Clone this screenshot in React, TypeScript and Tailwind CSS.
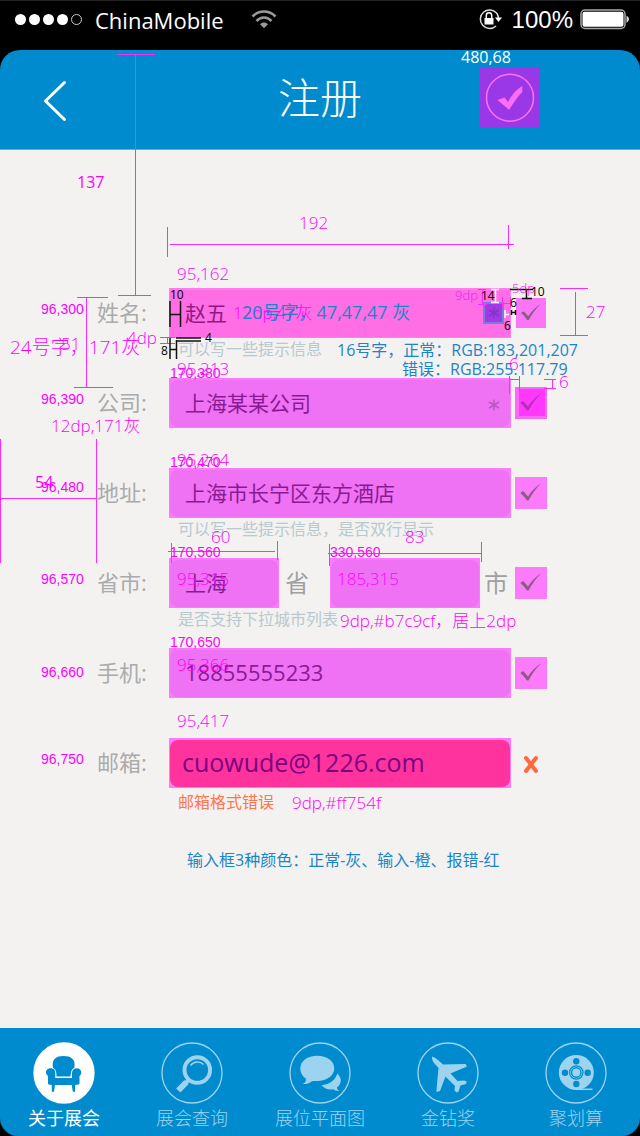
import type { ReactNode } from "react";

function StatusBar() {
  return (
    <div className="flex h-[50px] items-start border-t border-[#222] pl-[15px] pr-[10px] text-white">
      <svg className="mt-[12px] h-[14px] w-[70px]" viewBox="0 0 70 14" aria-hidden="true">
        {[5.5, 19.5, 33.5, 47.5].map((x) => (
          <circle key={x} cx={x} cy="6.5" r="5.5" fill="#fff" />
        ))}
        <circle cx="61.5" cy="6.5" r="5" fill="none" stroke="#ccc" />
      </svg>
      <span className="ml-[10px] mt-[3px] text-[22px] leading-8">ChinaMobile</span>
      <svg className="ml-[27px] mt-[9px] h-[19px] w-[26px]" viewBox="0 0 26 19" fill="none" stroke="#999" aria-hidden="true">
        <path d="M1.500 6.500C8-.2 18-.2 24.500 6.500" strokeWidth="2.600" />
        <path d="M5.500 11C10 6.300 16 6.300 20.500 11" strokeWidth="2.600" />
        <path d="M9 14.200C11.300 12 14.700 12 17 14.200L13 18.200Z" fill="#999" stroke="none" />
      </svg>
      <svg className="ml-auto mt-[7px] h-[22px] w-[24px]" viewBox="0 0 24 22" aria-hidden="true">
        <path d="M19 5.500A9.300 9.300 0 1 0 18 18M19 5.500Q20.500 8 20.500 11" fill="none" stroke="#ddd" strokeWidth="1.500" />
        <path d="M17 9.500H24L20.500 14Z" fill="#fff" />
        <rect x="6.500" y="10" width="9" height="6.500" fill="#fff" />
        <path d="M8.300 10V7.500a2.700 2.700 0 0 1 5.400 0V10" fill="none" stroke="#fff" strokeWidth="1.500" />
      </svg>
      <span className="ml-[10px] mt-[3px] font-['Liberation_Sans',sans-serif] text-[24px] leading-8">100%</span>
      <svg className="ml-[7px] mt-[8px] h-[21px] w-[50px]" viewBox="0 0 50 21" aria-hidden="true">
        <rect x="1" y="1" width="44" height="18.500" rx="4" fill="none" stroke="#aaa" strokeWidth="1.500" />
        <rect x="2.500" y="2.700" width="41" height="15" rx="2" fill="#fff" />
        <path d="M46.500 6.500Q49 8 49 10.200T46.500 14Z" fill="#ddd" />
      </svg>
    </div>
  );
}

function Header() {
  return (
    <header className="grid h-[100px] grid-cols-[1fr_auto_1fr] items-center rounded-t-[20px] border-b border-[#58b4dd] bg-[#008bce] pb-[3px]">
      <button type="button" aria-label="返回" className="ml-[36px] flex h-[60px] w-[40px] items-center justify-center">
        <svg className="mt-[6px] h-[44px] w-[26px]" viewBox="0 0 26 44" fill="none" stroke="#fff" strokeWidth="3" strokeLinecap="round" strokeLinejoin="round" aria-hidden="true">
          <path d="M21.500 3.500L2.500 22L21.500 40.500" />
        </svg>
      </button>
      <h1 className="text-[42px] font-light leading-[60px] text-white">注册</h1>
      <button type="button" aria-label="提交" className="mr-[100px] h-[60px] w-[60px] justify-self-end bg-[#9a38e8]">
        <svg className="h-full w-full" viewBox="0 0 60 60" aria-hidden="true">
          <circle cx="30" cy="29.700" r="23.500" fill="none" stroke="#ff70f8" strokeWidth="1.500" />
          <path d="M17.500 32L24.500 29.500L28 34C31 28 36 21.500 42.300 18V24C37 29 33 36 29 42C26 39 21 35 17.500 32Z" fill="#ff6cf8" />
        </svg>
      </button>
    </header>
  );
}

type TickTone = "small" | "bright" | "plain";

function Tick({ tone = "plain" }: { tone?: TickTone }) {
  const box =
    tone === "small"
      ? "mx-px h-[30px] w-[30px] bg-[#fb76f6]"
      : tone === "bright"
        ? "h-[32px] w-[32px] bg-[#fa68f6]"
        : "h-[32px] w-[32px] bg-[#fc7bfa]";
  return (
    <span className={`block shrink-0 ${box}`}>
      <svg className="h-full w-full" viewBox="0 0 32 32" aria-hidden="true">
        {tone === "bright" && <rect x="4" y="2" width="26" height="27" fill="#ff38fc" />}
        <path d="M5.500 16Q8 13 9.500 15.500L13 19.500Q18 11.500 26.500 6Q19 13 13.500 23.500H12Q9 19 5.500 16Z" fill={tone === "bright" ? "#b42fbc" : "#8b5c84"} />
      </svg>
    </span>
  );
}

function Row({ id, label, hint, error, mark, children }: { id: string; label: string; hint?: string; error?: boolean; mark: ReactNode; children: ReactNode }) {
  return (
    <div className="h-[90px]">
      <div className="flex h-[50px] items-center">
        <label htmlFor={id} className="w-[72px] shrink-0 pb-[2px] text-[22px] leading-8 text-[#ababab]">
          {label}
        </label>
        <div className="flex min-w-0 flex-1 items-center">{children}</div>
        <div className="ml-1 flex w-8 shrink-0 justify-center">{mark}</div>
      </div>
      {hint && (
        <p className={error ? "pl-[81px] pt-1 text-[16px] leading-5 text-[#ff754f]" : "pl-[81px] pt-px text-[16px] leading-5 text-[#b7c9cf]"}>{hint}</p>
      )}
    </div>
  );
}

function Field({ id, value, label, className = "flex-1", tone = "bg-[#ee72f3] rounded-[8px] text-[#8a1a93]", frame = "bg-[#fc7bfa]", text = "text-[21px] pl-[15px]", star }: { id: string; value: string; label?: string; className?: string; tone?: string; frame?: string; text?: string; star?: ReactNode }) {
  return (
    <div className={`relative h-[50px] min-w-0 px-px pb-px pt-[2px] ${frame} ${className}`}>
      <input id={id} aria-label={label} defaultValue={value} className={`block h-full w-full pb-1 outline-none ${tone} ${text}`} />
      {star}
    </div>
  );
}

function Star({ color }: { color: string }) {
  return (
    <svg className="h-[14px] w-[14px]" viewBox="0 0 14 14" fill="none" stroke={color} strokeWidth="1.500" aria-hidden="true">
      <path d="M7 1.500V12.500M2 4L12 10M12 4L2 10" />
    </svg>
  );
}

function Form() {
  return (
    <form className="pl-[97px] pr-[93px] pt-[138px]">
      <Row id="name" label="姓名:" hint="可以写一些提示信息" mark={<Tick tone="small" />}>
        <Field
          id="name"
          value="赵五"
          frame="bg-[#ff7cec]"
          tone="bg-[#ff6ee4] text-[#8d1a83]"
          star={
            <span className="absolute right-[7px] top-[14px] flex h-[22px] w-[21px] items-center justify-center border-2 border-[#7481dc] bg-[#a238e8]">
              <Star color="#8434c8" />
            </span>
          }
        />
      </Row>
      <Row id="company" label="公司:" mark={<Tick tone="bright" />}>
        <Field
          id="company"
          value="上海某某公司"
          star={
            <span className="absolute right-[10px] top-[20px]">
              <Star color="#b858c0" />
            </span>
          }
        />
      </Row>
      <Row id="address" label="地址:" hint="可以写一些提示信息，是否双行显示" mark={<Tick />}>
        <Field id="address" value="上海市长宁区东方酒店" />
      </Row>
      <Row id="province" label="省市:" hint="是否支持下拉城市列表" mark={<Tick />}>
        <Field id="province" value="上海" className="w-[110px] shrink-0" />
        <span className="w-[51px] shrink-0 pl-[6px] text-[24px] leading-8 text-[#a0a0a0]">省</span>
        <Field id="city" label="市" value="" className="flex-1" />
        <span className="w-[31px] shrink-0 pl-[4px] text-[24px] leading-8 text-[#a0a0a0]">市</span>
      </Row>
      <Row id="phone" label="手机:" mark={<Tick />}>
        <Field id="phone" value="18855555233" text="text-[22px] pl-[15px]" />
      </Row>
      <Row
        id="email"
        label="邮箱:"
        hint="邮箱格式错误"
        error
        mark={
          <svg className="h-[20px] w-[16px]" viewBox="0 0 16 20" fill="none" stroke="#ff6a3c" strokeWidth="4" strokeLinecap="round" aria-hidden="true">
            <path d="M3 5L13 18M13 5L3 18" />
          </svg>
        }
      >
        <Field id="email" value="cuowude@1226.com" tone="bg-[#ff339d] rounded-[8px] text-[#7b0080]" text="text-[25px] pl-[12px]" />
      </Row>
      <p className="pl-[90px] pt-[22px] text-[16px] leading-5 text-[#1c85c7]">输入框3种颜色：正常-灰、输入-橙、报错-红</p>
    </form>
  );
}

const light = "#9dd3ee";

const tabs: { name: string; active?: boolean; icon: ReactNode }[] = [
  {
    name: "关于展会",
    active: true,
    icon: (
      <g fill="#008bce">
        <path d="M20 26C18.500 17 23 14 30.500 14S43 17 41.300 26C38 27.500 38 30 37.500 34.500H23.500C23.500 30 23 27.500 20 26Z" />
        <path d="M13 30.500C13 27.500 15.500 26.300 17.700 26.300C21 26.300 22.300 28.500 22.300 31V36H39V31C39 28.500 40.500 26.300 43.500 26.300C46 26.300 48.300 27.800 48.300 30.500C48.300 32.500 46.500 34 46.500 34V41C46.500 42 45.500 42.500 45 42.500L42 43V49.700H39.800L38.800 43H22L21 49.700H18.800V43L16 42.500C15.500 42.500 15 42 15 41V34S13 32.500 13 30.500Z" />
      </g>
    ),
  },
  {
    name: "展会查询",
    icon: (
      <g fill="none" stroke={light}>
        <circle cx="36.300" cy="28" r="12.800" strokeWidth="4" />
        <path d="M29.500 23.500A8.500 8.500 0 0 1 42.500 22.500" strokeWidth="1.500" />
        <path d="M27.500 38L24 42" strokeWidth="4" />
        <path d="M25.500 40L17.300 48.500" strokeWidth="6" />
      </g>
    ),
  },
  {
    name: "展位平面图",
    icon: (
      <g fill={light}>
        <path d="M28.300 13.700C38 13.700 45.300 19 45.300 26.300S38 39 28.300 39C25.500 39 23 38.600 21 40.500Q18 42.500 13.800 42C16.500 40.500 17.300 39 16.800 36.500C13 34 11.300 30.500 11.300 26.300C11.300 19 18.500 13.700 28.300 13.700Z" />
        <path d="M48.300 31.500C53 36 53 41.500 48 45.500Q47.800 47.500 50.500 49Q46 49.200 44.300 47.300C39.500 48 35.500 46.800 32.500 43.300C40.500 42.500 46.500 38 48.300 31.500Z" />
      </g>
    ),
  },
  {
    name: "金钻奖",
    icon: <path fill={light} d="M15 14.500Q18 15 21 18L26 22.500L48.500 22L50 24.500L33.500 31.500L40.500 39L47 38.500L49.700 39.500L49 42L43.500 43.500L41.500 49.500L39.500 50.500L37.500 48.500L38 44L28.500 34.500L23 49L19.500 50V48L21.500 26L17 21Q14.500 17.500 15 14.500Z" />,
  },
  {
    name: "聚划算",
    icon: (
      <g>
        <circle cx="31.300" cy="30.500" r="17.500" fill={light} />
        <path d="M31 47.300H47.500" stroke={light} strokeWidth="1.500" />
        <g fill="#008bce">
          <circle cx="31.300" cy="19.300" r="3.200" />
          <circle cx="31.300" cy="42" r="3.200" />
          <circle cx="20" cy="30.700" r="3.200" />
          <circle cx="42.700" cy="30.700" r="3.200" />
        </g>
        <circle cx="31.300" cy="30.500" r="6.700" fill="none" stroke="#008bce" strokeWidth="1.200" />
        <circle cx="31.300" cy="30.500" r="4.700" fill={light} stroke="#008bce" strokeWidth="1.400" />
      </g>
    ),
  },
];

function TabBar() {
  return (
    <nav className="grid h-[108px] grid-cols-5 rounded-b-[18px] bg-[#008bce] pt-[14px]">
      {tabs.map((tab) => (
        <a key={tab.name} href="#" className={`flex flex-col items-center text-[18px] leading-7 ${tab.active ? "text-white" : "font-light text-[#9dd3ee]"}`}>
          <svg className="h-[62px] w-[62px]" viewBox="0 0 62 62" aria-hidden="true">
            <circle cx="31" cy="31" r="30" fill={tab.active ? "#fff" : "none"} stroke={tab.active ? "#fff" : light} strokeWidth="1.300" />
            {tab.icon}
          </svg>
          <span>{tab.name}</span>
        </a>
      ))}
    </nav>
  );
}

const big = "text-[17px] font-light text-[#ff00ff]";
const coord = "font-['Liberation_Sans',sans-serif] text-[14px] text-[#ff00ff]";
const tiny = "text-[12px] text-black";
const blue = "text-[#1c85c7]";

const notes: [string, string][] = [
  ["480,68", "left-[461px] top-[47px] text-[16px] text-white"],
  ["137", "left-[77px] top-[172px] text-[16px] font-medium text-[#ff00ff]"],
  ["192", `left-[299px] top-[213px] ${big}`],
  ["95,162", `left-[177px] top-[264px] ${big}`],
  ["96,300", `left-[41px] top-[299px] ${coord}`],
  ["51", `left-[61px] top-[334px] ${big}`],
  ["24号字，171灰", "left-[10px] top-[337px] text-[19px] font-light text-[#ff00ff]"],
  ["4dp", `left-[127px] top-[328px] ${big}`],
  ["95,213", `left-[177px] top-[359px] ${big}`],
  ["170,380", `left-[170px] top-[363px] ${coord}`],
  ["96,390", `left-[41px] top-[389px] ${coord}`],
  ["12dp,171灰", `left-[51px] top-[416px] ${big}`],
  ["12dp,47灰", `left-[233px] top-[303px] ${big}`],
  ["20号字，47,47,47 灰", `left-[242px] top-[302px] text-[18px] ${blue}`],
  ["16号字，正常：RGB:183,201,207", `left-[337px] top-[340px] text-[16px] ${blue}`],
  ["错误：RGB:255.117.79", `left-[402px] top-[359px] text-[16px] ${blue}`],
  ["9dp", "left-[455px] top-[285px] text-[13px] font-light text-[#e81cf0]"],
  ["5dp", "left-[512px] top-[278px] text-[13px] font-light text-[#ff00ff]"],
  ["27", `left-[586px] top-[302px] ${big}`],
  ["6", `left-[509px] top-[354px] ${big}`],
  ["6", `left-[559px] top-[372px] ${big}`],
  ["54", "left-[35px] top-[472px] text-[16px] font-medium text-[#ff00ff]"],
  ["96,480", `left-[41px] top-[477px] ${coord}`],
  ["95,264", `left-[177px] top-[450px] ${big}`],
  ["170,470", `left-[170px] top-[452px] ${coord}`],
  ["60", `left-[211px] top-[527px] ${big}`],
  ["83", `left-[405px] top-[527px] ${big}`],
  ["170,560", `left-[170px] top-[542px] ${coord}`],
  ["330,560", `left-[330px] top-[542px] ${coord}`],
  ["96,570", `left-[41px] top-[569px] ${coord}`],
  ["95,315", `left-[177px] top-[569px] ${big}`],
  ["185,315", `left-[337px] top-[569px] ${big}`],
  ["9dp,#b7c9cf，居上2dp", `left-[340px] top-[611px] ${big}`],
  ["170,650", `left-[170px] top-[632px] ${coord}`],
  ["95,366", `left-[177px] top-[655px] ${big}`],
  ["96,660", `left-[41px] top-[662px] ${coord}`],
  ["95,417", `left-[177px] top-[711px] ${big}`],
  ["96,750", `left-[41px] top-[749px] ${coord}`],
  ["9dp,#ff754f", `left-[292px] top-[793px] ${big}`],
  ["10", `left-[170px] top-[285px] ${tiny}`],
  ["8", `left-[161px] top-[341px] ${tiny}`],
  ["4", `left-[205px] top-[328px] ${tiny}`],
  ["14", `left-[481px] top-[286px] ${tiny}`],
  ["10", `left-[531px] top-[282px] ${tiny}`],
  ["6", `left-[510px] top-[293px] ${tiny}`],
  ["6", `left-[504px] top-[316px] ${tiny}`],
];

function Annotations() {
  return (
    <div className="pointer-events-none absolute inset-0 overflow-hidden">
      <svg className="absolute inset-0 h-full w-full" fill="none" aria-hidden="true">
        <path
          stroke="#fb2cfb"
          d="M117 54.500H155M135.500 54V295M118 295.500H151M167.500 227V257M170 244.500H514M508.500 225V249M77 297.500H108M86.500 297V387M74 387.500H113M.5 439V563M96.500 439V563M0 498.500H97M168 551.500H275M171.500 543V563M277.500 541V560M328 553.500H482M329.500 544V566M481.500 542V562M560 288.500H588M560 335.500H588M575.500 292V335M160 337.500H175M160 343.500H175M167.500 337V343M478 289.500H486M478 304.500H487M482.500 289V304M502.500 297V308M510.500 297V308M502 303.500H510M509.500 376V394M519.500 376V393M509 379.500H519M544 379.500H556M544 388.500H556M552.500 379V388"
        />
        <path
          stroke="#111"
          strokeWidth="1.500"
          d="M170 301V327M180.500 301V327M170 314.500H180M170 338V359M176.500 340V359M170 349.500H176M176 338H201M176 341H201M510 289.500H533M522 298.500H532M526.500 289V298M511.500 310V315M515.500 310V315M511 312.500H515"
        />
        <path stroke="#fff" strokeWidth="1.500" d="M491 289.500H499M491 302.500H499M495.500 289V302M505 310V318M505 314.500H509" />
      </svg>
      {notes.map(([text, place], i) => (
        <span key={i} className={`absolute whitespace-nowrap leading-5 ${place}`}>
          {text}
        </span>
      ))}
    </div>
  );
}

export default function App() {
  return (
    <div className="relative flex min-h-screen flex-col bg-black font-['Open_Sans','Noto_Sans_CJK_SC',sans-serif]">
      <StatusBar />
      <Header />
      <main className="flex-1 bg-[#f3f2f0]">
        <Form />
      </main>
      <TabBar />
      <Annotations />
    </div>
  );
}
